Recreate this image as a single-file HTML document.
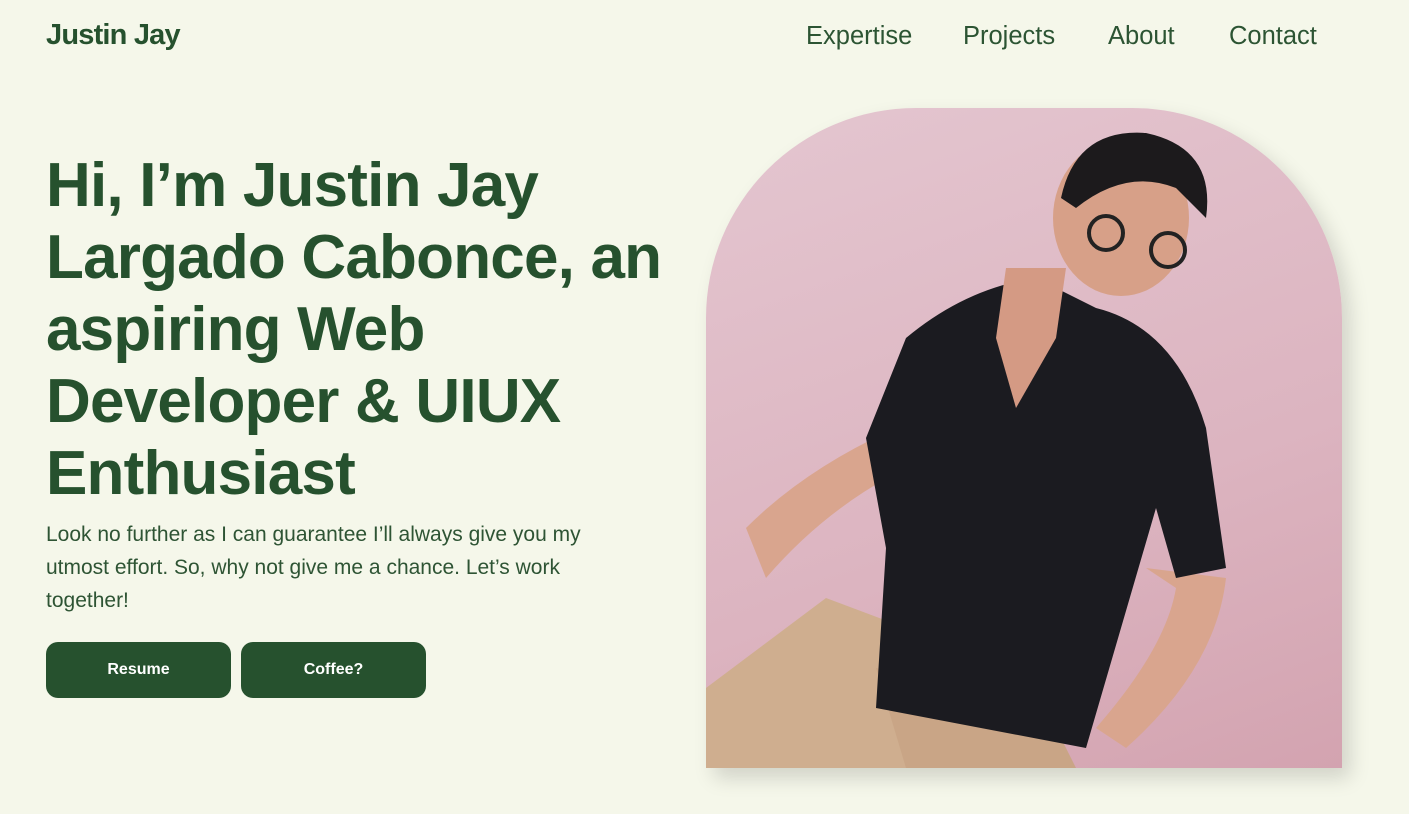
<!DOCTYPE html>
<html><head><meta charset="utf-8"><style>
*{margin:0;padding:0;box-sizing:border-box}
body{width:1409px;height:814px;background:#f5f7ea;font-family:"Liberation Sans",sans-serif;color:#26512e;position:relative;overflow:hidden}
.logo{position:absolute;left:46px;top:19px;font-size:29px;font-weight:bold;letter-spacing:-0.8px}
.nav{position:absolute;top:22px;font-size:25.5px;color:#2c5433}
h1{position:absolute;left:46px;top:150px;width:680px;font-size:62px;line-height:72px;font-weight:bold;letter-spacing:-0.8px;white-space:nowrap}
p{position:absolute;left:46px;top:518px;width:600px;font-size:21px;line-height:33px;color:#2e5434}
.btn{position:absolute;top:642px;width:185px;height:56px;background:#26512e;color:#fff;border-radius:12px;font-size:16px;font-weight:bold;text-align:center;line-height:56px}
.img{position:absolute;left:706px;top:108px;width:636px;height:660px;border-radius:210px 210px 0 0;overflow:hidden;background:linear-gradient(160deg,#e4c6d0,#dcb4c0 60%,#d3a3b0);box-shadow:8px 10px 20px rgba(0,0,0,.15)}
</style></head><body>
<div class="logo">Justin Jay</div>
<div class="nav" style="left:806px">Expertise</div>
<div class="nav" style="left:963px">Projects</div>
<div class="nav" style="left:1108px">About</div>
<div class="nav" style="left:1229px">Contact</div>
<h1>Hi, I’m Justin Jay<br>Largado Cabonce, an<br>aspiring Web<br>Developer &amp; UIUX<br>Enthusiast</h1>
<p>Look no further as I can guarantee I’ll always give you my utmost effort. So, why not give me a chance. Let’s work together!</p>
<div class="btn" style="left:46px">Resume</div>
<div class="btn" style="left:241px">Coffee?</div>
<div class="img">
<svg width="636" height="660" viewBox="0 0 636 660">
<path d="M0 580 L120 490 L200 520 L240 660 L0 660Z" fill="#cfae8f"/>
<path d="M170 560 L340 600 L370 660 L200 660Z" fill="#c9a586"/>
<path d="M40 420 Q100 360 190 320 L200 360 Q120 400 60 470Z" fill="#d9a58e"/>
<path d="M440 460 L520 470 Q510 560 420 640 L390 620 Q460 540 470 480Z" fill="#d9a58e"/>
<path d="M200 230 Q260 180 330 170 L390 200 Q470 220 500 320 L520 460 L470 470 L450 400 L380 640 L170 600 L180 440 L160 330 Z" fill="#1b1b20"/>
<path d="M300 160 L360 160 L350 230 L310 300 L290 230Z" fill="#d49a84"/>
<ellipse cx="415" cy="110" rx="68" ry="78" fill="#d7a088"/>
<path d="M355 90 Q370 20 440 25 Q510 40 500 110 L470 80 Q420 60 370 100Z" fill="#1c1a1c"/>
<circle cx="400" cy="125" r="17" fill="none" stroke="#222" stroke-width="4"/>
<circle cx="462" cy="142" r="17" fill="none" stroke="#222" stroke-width="4"/>
</svg>
</div>
</body></html>
